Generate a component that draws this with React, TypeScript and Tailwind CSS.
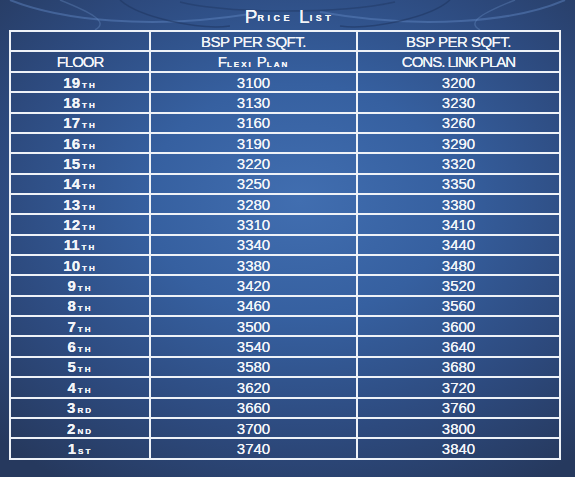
import React from 'react'

const rows: Array<[string, string, number, number]> = [
  ['19', 'th', 3100, 3200],
  ['18', 'th', 3130, 3230],
  ['17', 'th', 3160, 3260],
  ['16', 'th', 3190, 3290],
  ['15', 'th', 3220, 3320],
  ['14', 'th', 3250, 3350],
  ['13', 'th', 3280, 3380],
  ['12', 'th', 3310, 3410],
  ['11', 'th', 3340, 3440],
  ['10', 'th', 3380, 3480],
  ['9', 'th', 3420, 3520],
  ['8', 'th', 3460, 3560],
  ['7', 'th', 3500, 3600],
  ['6', 'th', 3540, 3640],
  ['5', 'th', 3580, 3680],
  ['4', 'th', 3620, 3720],
  ['3', 'rd', 3660, 3760],
  ['2', 'nd', 3700, 3800],
  ['1', 'st', 3740, 3840],
]

// small-caps suffix like the copperplate style in the flyer
const Suffix = ({ children }: { children: React.ReactNode }) => (
  <span className="ml-[2px] text-[11px] font-bold tracking-[2px] [font-variant-caps:all-small-caps]">
    {children}
  </span>
)

const cell = 'border-2 border-[#eef2f8] text-center align-middle p-0'

export default function App() {
  return (
    <div className="relative w-[575px] h-[477px] overflow-hidden bg-[radial-gradient(ellipse_75%_70%_at_52%_42%,#416eb0_0%,#3660a0_35%,#2d4a7e_70%,#26395e_100%)] font-['Liberation_Sans',Arial,sans-serif] text-[#f3f5f9] [text-shadow:0_0_0.6px_#ffffff]">
      {/* swirl ornament at top */}
      <svg className="absolute left-0 top-0" width="575" height="40" viewBox="0 0 575 40" fill="none">
        <path d="M10 0 C 60 20, 150 30, 250 14" stroke="#5b82bd" strokeOpacity="0.5" strokeWidth="2" />
        <path d="M565 0 C 515 22, 420 30, 320 12" stroke="#5b82bd" strokeOpacity="0.5" strokeWidth="2" />
        <path d="M120 0 C 140 18, 200 30, 230 26" stroke="#1f3763" strokeOpacity="0.6" strokeWidth="1.5" />
        <path d="M450 0 C 430 18, 370 30, 340 26" stroke="#1f3763" strokeOpacity="0.6" strokeWidth="1.5" />
        <path d="M180 2 C 230 14, 340 14, 395 2" stroke="#1f3763" strokeOpacity="0.5" strokeWidth="1.5" />
        <path d="M60 0 C 90 12, 110 22, 95 30" stroke="#6a8fc6" strokeOpacity="0.35" strokeWidth="1.5" />
        <path d="M515 0 C 485 12, 465 22, 480 30" stroke="#6a8fc6" strokeOpacity="0.35" strokeWidth="1.5" />
      </svg>

      <div className="relative flex flex-col">
        <div className="h-[30px] flex items-center justify-center pt-[2px] pl-[4px]">
          <span className="text-[19px] leading-none">P</span>
          <span className="text-[13px] leading-none font-bold tracking-[3.5px] [font-variant-caps:all-small-caps] mr-[6px]">rice</span>
          <span className="text-[19px] leading-none">L</span>
          <span className="text-[13px] leading-none font-bold tracking-[3.5px] [font-variant-caps:all-small-caps]">ist</span>
        </div>

        <table className="ml-[9px] w-[550px] border-collapse table-fixed text-[15px] leading-none">
          <colgroup>
            <col className="w-[140px]" />
            <col className="w-[207px]" />
            <col className="w-[203px]" />
          </colgroup>
          <thead>
            <tr className="h-[20px]">
              <th className={cell}></th>
              <th className={`${cell} font-normal tracking-[-0.5px]`}>BSP PER SQFT.</th>
              <th className={`${cell} font-normal tracking-[-0.5px]`}>BSP PER SQFT.</th>
            </tr>
            <tr className="h-[21px]">
              <th className={`${cell} font-normal tracking-[-1px]`}>FLOOR</th>
              <th className={`${cell} font-normal`}>
                <span className="text-[15px]">F</span>
                <span className="text-[12px] font-bold tracking-[2px] [font-variant-caps:all-small-caps] mr-[4px]">lexi</span>
                <span className="text-[15px]">P</span>
                <span className="text-[12px] font-bold tracking-[2px] [font-variant-caps:all-small-caps]">lan</span>
              </th>
              <th className={`${cell} font-normal tracking-[-1px]`}>CONS. LINK PLAN</th>
            </tr>
          </thead>
          <tbody>
            {rows.map(([num, suf, flexi, cons]) => (
              <tr key={num} className="h-[20.35px]">
                <td className={cell}>
                  <span className="text-[15px] font-bold">{num}</span>
                  <Suffix>{suf}</Suffix>
                </td>
                <td className={cell}>{flexi}</td>
                <td className={cell}>{cons}</td>
              </tr>
            ))}
          </tbody>
        </table>
      </div>
    </div>
  )
}
